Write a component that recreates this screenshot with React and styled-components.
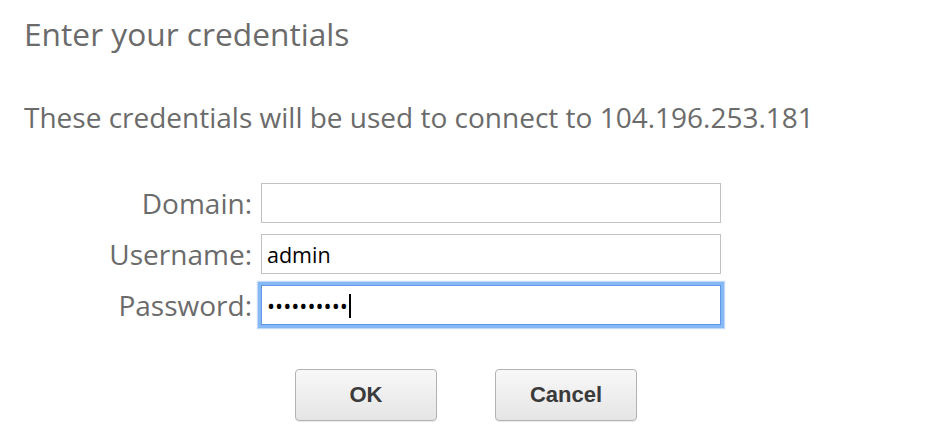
import React from 'react'
import styled, { createGlobalStyle } from 'styled-components'

const GlobalStyle = createGlobalStyle`
  html, body {
    margin: 0;
    padding: 0;
    background: #fff;
  }
`

const Dialog = styled.div`
  width: 946px;
  height: 442px;
  box-sizing: border-box;
  padding: 14px 24px 0 24px;
  font-family: 'Open Sans', sans-serif;
  color: #6b6b6b;
`

const Title = styled.h1`
  margin: 0;
  font-size: 31.7px;
  font-weight: 400;
  line-height: 40px;
  white-space: nowrap;
`

const Message = styled.p`
  margin: 45px 0 0 0;
  font-size: 28px;
  line-height: 36px;
  white-space: nowrap;
`

const Form = styled.div`
  display: grid;
  grid-template-columns: 228px 460px;
  column-gap: 9px;
  row-gap: 11px;
  margin-top: 48px;
  align-items: center;
`

const Label = styled.label`
  text-align: right;
  font-size: 28px;
  line-height: 40px;
  white-space: nowrap;
`

const FieldWrap = styled.div`
  position: relative;
  width: 460px;
  height: 40px;
`

const Field = styled.input`
  box-sizing: border-box;
  width: 460px;
  height: 40px;
  margin: 0;
  padding: 0 5px;
  border: 1px solid ${p => (p.$focused ? '#5f98e6' : '#c2c2c2')};
  border-radius: 0;
  font-family: 'Open Sans', sans-serif;
  font-size: 21.5px;
  color: #000;
  background: #fff;
  outline: none;
  box-shadow: ${p =>
    p.$focused
      ? '0 0 0 3px #86b8f6, 0 0 1px 4px rgba(134, 184, 246, 0.5)'
      : 'none'};
`

const Caret = styled.span`
  position: absolute;
  left: ${p => p.$left}px;
  top: 9px;
  width: 2px;
  height: 24px;
  background: #000;
`

const Buttons = styled.div`
  display: flex;
  gap: 58px;
  margin-top: 44px;
  padding-left: 271px;
`

const Button = styled.button`
  box-sizing: border-box;
  width: 142px;
  height: 52px;
  border: 1px solid #b2b2b2;
  border-radius: 4px;
  background: linear-gradient(#f8f8f8, #e5e5e5);
  font-family: 'Liberation Sans', Arial, sans-serif;
  font-weight: 700;
  font-size: 22px;
  color: #3a3a3a;
  box-shadow: 0 1px 1px rgba(0, 0, 0, 0.08);
`

const App = () => (
  <React.Fragment>
    <GlobalStyle />
    <Dialog>
      <Title>Enter your credentials</Title>
      <Message>These credentials will be used to connect to 104.196.253.181</Message>
      <Form>
        <Label>Domain:</Label>
        <FieldWrap>
          <Field type="text" defaultValue="" />
        </FieldWrap>
        <Label>Username:</Label>
        <FieldWrap>
          <Field type="text" defaultValue="admin" />
        </FieldWrap>
        <Label>Password:</Label>
        <FieldWrap>
          <Field type="password" defaultValue="••••••••••" $focused />
          <Caret $left={88} />
        </FieldWrap>
      </Form>
      <Buttons>
        <Button>OK</Button>
        <Button>Cancel</Button>
      </Buttons>
    </Dialog>
  </React.Fragment>
)

export default App
